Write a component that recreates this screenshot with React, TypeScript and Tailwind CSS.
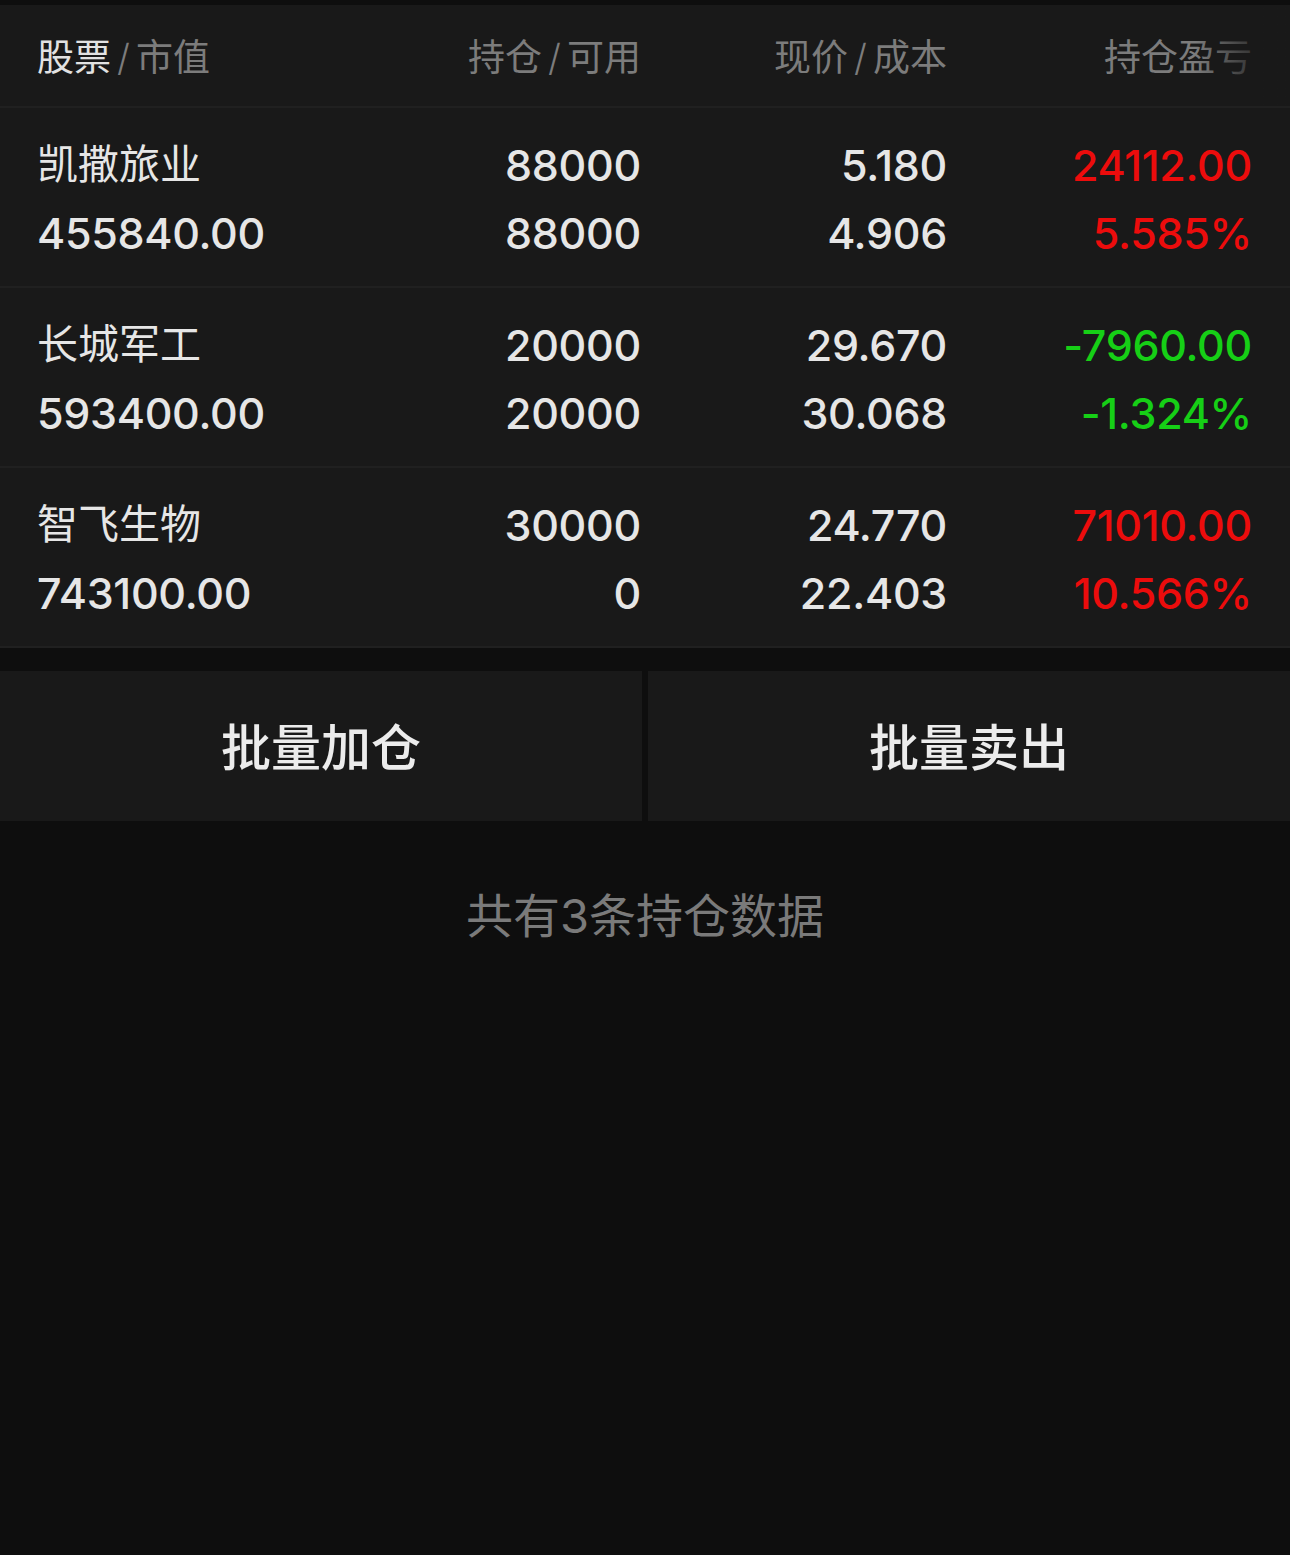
import React from 'react';

type Row = {
  name: string;
  value: string;
  hold: string;
  avail: string;
  price: string;
  cost: string;
  pnl: string;
  pct: string;
  up: boolean;
};

const rows: Row[] = [
  { name: '凯撒旅业', value: '455840.00', hold: '88000', avail: '88000', price: '5.180', cost: '4.906', pnl: '24112.00', pct: '5.585%', up: true },
  { name: '长城军工', value: '593400.00', hold: '20000', avail: '20000', price: '29.670', cost: '30.068', pnl: '-7960.00', pct: '-1.324%', up: false },
  { name: '智飞生物', value: '743100.00', hold: '30000', avail: '0', price: '24.770', cost: '22.403', pnl: '71010.00', pct: '10.566%', up: true },
];

const font = { fontFamily: '"Inter", "Noto Sans CJK SC", sans-serif' };
const grid = 'grid grid-cols-[298px_306px_306px_1fr] pl-[37px] pr-[38px]';

function Num({ children, className = '' }: { children: React.ReactNode; className?: string }) {
  return <div className={`h-[68px] flex items-center text-[43px] font-medium tracking-[-0.3px] ${className}`}>{children}</div>;
}

export default function App() {
  return (
    <div className="min-h-[1555px] bg-[#0e0e0e] pt-[5px]" style={font}>
      <div className="bg-[#191919]">
        <div className={`${grid} relative h-[103px] pt-[4px] items-center border-b-2 border-[#202020] text-[37px] text-[#7c7c7c]`}>
          <div>
            <span className="text-[#e2e2e2]">股票</span>
            <span className="mx-[6px] font-light">/</span>市值
          </div>
          <div className="text-right">持仓<span className="mx-[6px] font-light">/</span>可用</div>
          <div className="text-right">现价<span className="mx-[6px] font-light">/</span>成本</div>
          <div className="text-right">持仓盈亏</div>
          <div className="absolute right-0 top-0 h-full w-[95px] bg-gradient-to-r from-transparent via-[#191919]/60 to-[#191919]" />
        </div>
        {rows.map((r) => (
          <div key={r.name} className={`${grid} h-[180px] content-center pt-[4px] border-b-2 border-[#202020] text-[#e6e6e6]`}>
            <div>
              <div className="h-[68px] flex items-center text-[41px]">{r.name}</div>
              <Num>{r.value}</Num>
            </div>
            <div>
              <Num className="justify-end">{r.hold}</Num>
              <Num className="justify-end">{r.avail}</Num>
            </div>
            <div>
              <Num className="justify-end">{r.price}</Num>
              <Num className="justify-end">{r.cost}</Num>
            </div>
            <div className={r.up ? 'text-[#ec0c0c]' : 'text-[#16cf16]'}>
              <Num className="justify-end">{r.pnl}</Num>
              <Num className="justify-end">{r.pct}</Num>
            </div>
          </div>
        ))}
      </div>
      <div className="mt-[23px] flex gap-[6px]">
        <button className="flex-1 h-[150px] pt-[4px] bg-[#191919] text-[50px] font-medium text-[#ececec]">批量加仓</button>
        <button className="flex-1 h-[150px] pt-[4px] bg-[#191919] text-[50px] font-medium text-[#ececec]">批量卖出</button>
      </div>
      <div className="pt-[60px] text-center text-[47px] text-[#7a7a7a]">共有3条持仓数据</div>
    </div>
  );
}
